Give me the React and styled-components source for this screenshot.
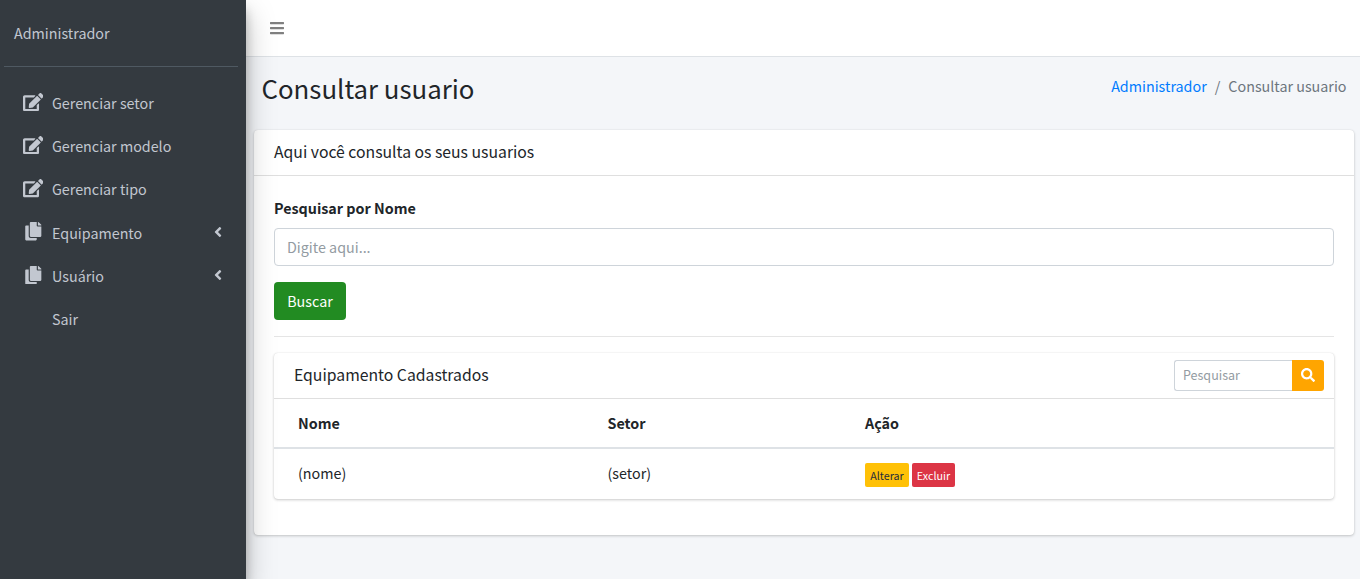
import React from 'react';
import styled, { createGlobalStyle } from 'styled-components';
import { FaAngleLeft, FaBars, FaCopy, FaEdit, FaSearch } from 'react-icons/fa';

const GlobalStyle = createGlobalStyle`
  *, *::before, *::after { box-sizing: border-box; }
  body {
    margin: 0;
    overflow: hidden;
    color: #212529;
    background: #f4f6f9;
    font-family: "Noto Sans CJK SC", "Open Sans", sans-serif;
    font-size: 14.32px;
    line-height: 24px;
  }
  input, button { font-family: inherit; }
`;

const Page = styled.div`
  display: flex;
  height: 100vh;
`;

const Sidebar = styled.aside`
  position: relative;
  z-index: 2;
  flex: none;
  width: 246px;
  padding: 0 8px 0 4px;
  background: #343a40;
  color: #c2c7d0;
  box-shadow: 0 14px 28px rgba(0, 0, 0, 0.25), 0 10px 10px rgba(0, 0, 0, 0.22);
`;

const UserPanel = styled.div`
  height: 67px;
  padding: 21px 10px 0;
  border-bottom: 1px solid #4f5962;
`;

const Nav = styled.nav`
  display: flex;
  flex-direction: column;
  gap: 3.2px;
  padding-top: 16px;
`;

const NavLink = styled.a`
  display: flex;
  align-items: center;
  height: 40px;
  padding: 0 16px;
  color: inherit;
  text-decoration: none;
`;

const NavIcon = styled.span`
  display: flex;
  justify-content: center;
  width: 26.4px;
  margin-right: 5.6px;
  margin-top: -2px;

  svg {
    flex: none;
    width: 20.6px;
    height: 18.4px;
  }
`;

const NavText = styled.span`
  flex: 1;
`;

const Arrow = styled(FaAngleLeft)`
  width: 8px;
  height: 16px;
  margin-top: -1px;
`;

const Main = styled.div`
  flex: 1;
  min-width: 0;
`;

const Topbar = styled.header`
  display: flex;
  align-items: center;
  height: 57px;
  padding-left: 24px;
  background: #fff;
  border-bottom: 1px solid #dee2e6;
  color: #808080;

  svg {
    width: 14px;
    height: 16px;
  }
`;

const ContentHeader = styled.div`
  display: flex;
  justify-content: space-between;
  height: 72px;
  padding: 13px 13.5px 0 15.5px;
`;

const PageTitle = styled.h1`
  margin: 0;
  font-size: 25.8px;
  font-weight: 400;
  line-height: 35px;
`;

const Breadcrumb = styled.ol`
  display: flex;
  gap: 8px;
  margin: 4px 0 0;
  padding: 0;
  list-style: none;
  color: #6c757d;

  a {
    color: #007bff;
    text-decoration: none;
  }
`;

const Card = styled.section`
  background: #fff;
  border-radius: 4px;
  box-shadow: 0 0 1px rgba(0, 0, 0, 0.125), 0 1px 3px rgba(0, 0, 0, 0.2);
`;

const MainCard = styled(Card)`
  height: 405px;
  margin: 1px 6px 0 8px;
`;

const CardHeader = styled.div`
  display: flex;
  justify-content: space-between;
  align-items: center;
  height: 46px;
  padding: 0 10px 0 20px;
  border-bottom: 1px solid rgba(0, 0, 0, 0.125);
`;

const CardTitle = styled.h3`
  margin: 0;
  padding-bottom: 2px;
  font-size: 15.75px;
  font-weight: 400;
  line-height: 20px;
`;

const CardBody = styled.div`
  padding: 20px;
`;

const Label = styled.label`
  display: block;
  margin-bottom: 8px;
  font-weight: 700;
`;

const Input = styled.input`
  display: block;
  width: 100%;
  height: 38px;
  padding: 0 12px 2px;
  border: 1px solid #ced4da;
  border-radius: 4px;
  background: #fff;
  font-size: 14.32px;

  &::placeholder { color: #939ba2; opacity: 1; }
`;

const SubmitButton = styled.button`
  display: block;
  width: 72px;
  height: 38px;
  margin-top: 16px;
  padding: 0;
  border: 0;
  border-radius: 4px;
  background: #228b22;
  color: #fff;
  font-size: 14.32px;
  line-height: 24px;
`;

const Divider = styled.hr`
  height: 1px;
  margin: 16px 0;
  border: 0;
  background: #e5e5e5;
`;

const SearchGroup = styled.div`
  display: flex;
  width: 150px;
  height: 31px;
`;

const SearchInput = styled(Input)`
  flex: 1;
  min-width: 0;
  height: 31px;
  padding: 0 8px 2px;
  border-right: 0;
  border-radius: 3px 0 0 3px;
  font-size: 12.53px;
`;

const SearchButton = styled.button`
  display: flex;
  align-items: center;
  justify-content: center;
  width: 32px;
  padding: 0 0 2px;
  border: 0;
  border-radius: 0 3px 3px 0;
  background: #ffa500;
  color: #fff;

  svg {
    width: 14px;
    height: 14px;
  }
`;

const Table = styled.div`
  height: 100px;
`;

const Row = styled.div`
  display: grid;
  grid-template-columns: 309.5px 257.5px 1fr;
  align-items: center;
  height: 50px;
  padding: 0 0 ${(p) => (p.$head ? 0 : 2)}px 24px;
  border-bottom: ${(p) => (p.$head ? '2px solid #dee2e6' : '0')};
  font-weight: ${(p) => (p.$head ? 700 : 400)};
`;

const Actions = styled.div`
  display: flex;
  gap: 3px;
  padding-top: 4px;
`;

const ActionButton = styled.button`
  width: ${(p) => (p.$danger ? 43 : 44)}px;
  height: 24px;
  padding: 2px 0 0;
  border: 0;
  border-radius: 2px;
  background: ${(p) => (p.$danger ? '#dc3545' : '#ffc107')};
  color: ${(p) => (p.$danger ? '#fff' : '#1f2d3d')};
  font-size: 10.74px;
  line-height: 18px;
`;

const links = [
  { label: 'Gerenciar setor', icon: <FaEdit /> },
  { label: 'Gerenciar modelo', icon: <FaEdit /> },
  { label: 'Gerenciar tipo', icon: <FaEdit /> },
  { label: 'Equipamento', icon: <FaCopy />, expandable: true },
  { label: 'Usuário', icon: <FaCopy />, expandable: true },
  { label: 'Sair' },
];

export default function App() {
  return (
    <Page>
      <GlobalStyle />
      <Sidebar>
        <UserPanel>Administrador</UserPanel>
        <Nav>
          {links.map((link) => (
            <NavLink key={link.label}>
              <NavIcon>{link.icon}</NavIcon>
              <NavText>{link.label}</NavText>
              {link.expandable && <Arrow />}
            </NavLink>
          ))}
        </Nav>
      </Sidebar>
      <Main>
        <Topbar>
          <FaBars />
        </Topbar>
        <ContentHeader>
          <PageTitle>Consultar usuario</PageTitle>
          <Breadcrumb>
            <li><a>Administrador</a></li>
            <li>/</li>
            <li>Consultar usuario</li>
          </Breadcrumb>
        </ContentHeader>
        <MainCard>
          <CardHeader>
            <CardTitle>Aqui você consulta os seus usuarios</CardTitle>
          </CardHeader>
          <CardBody>
            <Label>Pesquisar por Nome</Label>
            <Input placeholder="Digite aqui..." />
            <SubmitButton>Buscar</SubmitButton>
            <Divider />
            <Card>
              <CardHeader>
                <CardTitle>Equipamento Cadastrados</CardTitle>
                <SearchGroup>
                  <SearchInput placeholder="Pesquisar" />
                  <SearchButton><FaSearch /></SearchButton>
                </SearchGroup>
              </CardHeader>
              <Table>
                <Row $head>
                  <span>Nome</span>
                  <span>Setor</span>
                  <span>Ação</span>
                </Row>
                <Row>
                  <span>(nome)</span>
                  <span>(setor)</span>
                  <Actions>
                    <ActionButton>Alterar</ActionButton>
                    <ActionButton $danger>Excluir</ActionButton>
                  </Actions>
                </Row>
              </Table>
            </Card>
          </CardBody>
        </MainCard>
      </Main>
    </Page>
  );
}
